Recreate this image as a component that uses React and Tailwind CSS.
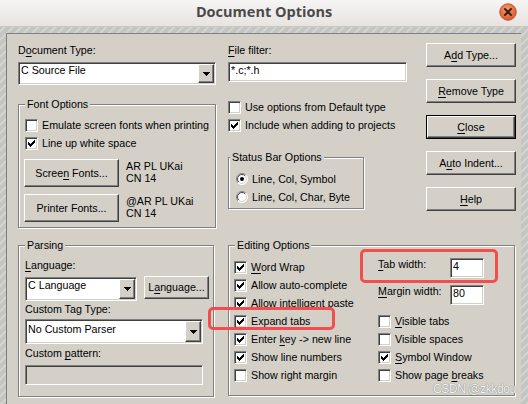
import React from 'react';

const face = "font-['Liberation_Sans',Arial,sans-serif]";
const raised =
  'flex items-center justify-center bg-[#d4d0c8] border border-t-white border-l-white border-b-[#404040] border-r-[#404040] shadow-[inset_-1px_-1px_#808080]';
const sunken =
  'border border-t-[#808080] border-l-[#808080] border-b-white border-r-white shadow-[inset_1px_1px_#404040,inset_-1px_-1px_#d4d0c8]';

const U = ({ children }) => <span className="underline underline-offset-[2px]">{children}</span>;

const Check = ({ on, children }) => (
  <div className="flex items-center h-[18px] whitespace-nowrap">
    <span className={`w-[13px] h-[13px] shrink-0 bg-white flex items-center justify-center ${sunken}`}>
      {on && (
        <svg width="7" height="7" viewBox="0 0 7 7" shapeRendering="crispEdges">
          <path
            d="M6 0h1v1h-1zM5 1h2v1h-2zM0 2h1v1h-1zM4 2h3v1h-3zM0 3h2v1h-2zM3 3h3v1h-3zM0 4h5v1h-5zM1 5h3v1h-3zM2 6h1v1h-1z"
            fill="#000"
          />
        </svg>
      )}
    </span>
    <span className="ml-[4px]">{children}</span>
  </div>
);

const Radio = ({ on, children }) => (
  <div className="flex items-center h-[18px] whitespace-nowrap">
    <svg width="12" height="12" viewBox="0 0 12 12" className="shrink-0">
      <defs>
        <linearGradient id="ro" x1="0" y1="0" x2="1" y2="1">
          <stop offset="0.5" stopColor="#808080" />
          <stop offset="0.5" stopColor="#ffffff" />
        </linearGradient>
        <linearGradient id="ri" x1="0" y1="0" x2="1" y2="1">
          <stop offset="0.5" stopColor="#404040" />
          <stop offset="0.5" stopColor="#d4d0c8" />
        </linearGradient>
      </defs>
      <circle cx="6" cy="6" r="5.5" fill="#fff" stroke="url(#ro)" />
      <circle cx="6" cy="6" r="4.5" fill="none" stroke="url(#ri)" />
      {on && <circle cx="6" cy="6" r="2" fill="#000" />}
    </svg>
    <span className="ml-[4px]">{children}</span>
  </div>
);

const Btn = ({ children, className = '', def }) =>
  def ? (
    <div className={`border border-black ${className}`}>
      <div className={`${raised} w-full h-full`}>
        <span className="whitespace-nowrap">{children}</span>
      </div>
    </div>
  ) : (
    <div className={`${raised} ${className}`}>
      <span className="whitespace-nowrap">{children}</span>
    </div>
  );

const Arrow = () => (
  <div className={`${raised} w-[16px] self-stretch shrink-0`}>
    <svg width="7" height="4" viewBox="0 0 7 4" shapeRendering="crispEdges">
      <path d="M0 0h7v1h-1v1h-1v1h-1v1h-1v-1h-1v-1h-1v-1h-1z" fill="#000" />
    </svg>
  </div>
);

const Select = ({ children, className = '', pt = '' }) => (
  <div className={`flex bg-white p-[1px] ${sunken} ${className}`}>
    <div className={`flex-1 pl-[1px] whitespace-nowrap ${pt}`}>{children}</div>
    <Arrow />
  </div>
);

const Input = ({ children, className = '' }) => (
  <div className={`bg-white pl-[2px] pt-[1px] whitespace-nowrap ${sunken} ${className}`}>{children}</div>
);

const Group = ({ title, legend = 'left-[6px]', className = '', children }) => (
  <div className={`relative border border-[#808080] shadow-[inset_1px_1px_white,1px_1px_white] ${className}`}>
    <span className={`absolute top-[-7px] ${legend} px-[2px] bg-[#d4d0c8] whitespace-nowrap`}>{title}</span>
    {children}
  </div>
);

const TitleBar = () => (
  <div className="relative h-[27px] shrink-0 flex items-center justify-center pb-[3px] bg-linear-to-b from-[#f6f5f4] to-[#e7e4e0] border-b border-[#cdc8c2]">
    <span className="font-['Open_Sans',sans-serif] font-bold text-[14.5px] leading-[18px] text-[#4a4a4a]">
      Document Options
    </span>
    <svg width="18" height="18" viewBox="0 0 18 18" className="absolute right-[11px] top-[3px]">
      <defs>
        <radialGradient id="cb" cx="0.45" cy="0.35" r="0.65">
          <stop offset="0" stopColor="#f79a70" />
          <stop offset="1" stopColor="#dc5526" />
        </radialGradient>
      </defs>
      <circle cx="9" cy="9" r="8.3" fill="url(#cb)" stroke="#b8471f" strokeWidth="0.8" />
      <path d="M6 6l6 6M12 6l-6 6" stroke="#3a2418" strokeWidth="2" strokeLinecap="round" />
    </svg>
  </div>
);

export default function App() {
  return (
    <div
      className={`relative w-[528px] h-[404px] overflow-hidden flex flex-col ${face} text-[10.7px] leading-[13px] text-black bg-[repeating-linear-gradient(135deg,#c4c4c2_0px,#c4c4c2_3px,#d9d9d7_4px,#c4c4c2_6px)]`}
    >
      <TitleBar />
      <div className="flex-1 ml-[6px] mr-[7px] mt-[6px] bg-[#d4d0c8] border-t border-l border-[#808080] flex flex-col">
        <div className="flex items-start pt-[10px] pl-[11px]">
          <div className="w-[198px] shrink-0">
            <div className="h-[13px]">
              D<U>o</U>cument Type:
            </div>
            <Select className="mt-[5px] w-[198px] h-[23px]">C Source File</Select>
            <Group title="Font Options" className="mt-[19px] h-[124px] pt-[11px] pl-[6px]">
              <Check>Emulate screen fonts when printing</Check>
              <Check on>Line up white space</Check>
              <div className="flex items-start mt-[7px] -ml-[1px]">
                <Btn className="w-[95px] h-[28px]">
                  Scree<U>n</U> Fonts...
                </Btn>
                <div className="ml-[7px] mt-[1px] leading-[12px]">
                  AR PL UKai
                  <br />
                  CN 14
                </div>
              </div>
              <div className="flex items-start mt-[7px] -ml-[1px]">
                <Btn className="w-[95px] h-[28px]">Printer Fonts...</Btn>
                <div className="ml-[7px] mt-[1px] leading-[12px]">
                  @AR PL UKai
                  <br />
                  CN 14
                </div>
              </div>
            </Group>
          </div>

          <div className="ml-[12px] w-[179px] shrink-0">
            <div className="h-[13px]">
              <U>F</U>ile filter:
            </div>
            <Input className="mt-[5px] w-[179px] h-[20px]">*.c;*.h</Input>
            <div className="mt-[16px]">
              <Check>Use options from Default type</Check>
              <Check on>Include when adding to projects</Check>
            </div>
            <Group title="Status Bar Options" legend="left-[1px]" className="mt-[23px] w-[136px] h-[52px] pt-[12px] pl-[7px]">
              <Radio on>Line, Col, Symbol</Radio>
              <Radio>Line, Col, Char, Byte</Radio>
            </Group>
          </div>

          <div className="ml-[19px] w-[90px] -mt-[1px] flex flex-col gap-[12px]">
            <Btn className="h-[24px]">
              A<U>d</U>d Type...
            </Btn>
            <Btn className="h-[24px]">
              <U>R</U>emove Type
            </Btn>
            <Btn def className="h-[24px]">
              <U>C</U>lose
            </Btn>
            <Btn className="h-[24px]">
              A<U>u</U>to Indent...
            </Btn>
            <Btn className="h-[24px]">
              <U>H</U>elp
            </Btn>
          </div>
        </div>

        <div className="flex items-start mt-[17px] pl-[11px]">
          <Group title="Parsing" className="w-[196px] h-[152px] shrink-0 pt-[13px] pl-[6px]">
            <div>
              <U>L</U>anguage:
            </div>
            <div className="flex items-start mt-[5px]">
              <Select className="w-[112px] h-[24px]">C Language</Select>
              <Btn className="ml-[7px] -mt-[1px] w-[65px] h-[23px]">
                L<U>a</U>nguage...
              </Btn>
            </div>
            <div className="mt-[2px]">Custom Tag Type:</div>
            <Select className="mt-[3px] w-[178px] h-[25px]" pt="pt-[2px]">
              No Custom Parser
            </Select>
            <div className="mt-[3px]">
              Custom <U>p</U>attern:
            </div>
            <div className={`mt-[5px] w-[178px] h-[20px] bg-[#d4d0c8] ${sunken}`} />
          </Group>

          <Group title="Editing Options" className="ml-[14px] w-[287px] h-[151px] shrink-0 flex">
            <div className="w-[149px] shrink-0 pl-[5px] pt-[12px]">
              <Check on>
                <U>W</U>ord Wrap
              </Check>
              <Check on>Allow auto-complete</Check>
              <Check on>Allow intelligent paste</Check>
              <Check on>
                E<U>x</U>pand tabs
              </Check>
              <Check on>
                Enter <U>k</U>ey -&gt; new line
              </Check>
              <Check on>Show line numbers</Check>
              <Check>Show right margin</Check>
            </div>
            <div className="pt-[12px]">
              <div className="flex items-start">
                <div className="w-[72px]">
                  <U>T</U>ab width:
                </div>
                <Input className="w-[34px] h-[20px]">4</Input>
              </div>
              <div className="flex items-start mt-[7px]">
                <div className="w-[72px]">
                  <U>M</U>argin width:
                </div>
                <Input className="w-[34px] h-[20px]">80</Input>
              </div>
              <div className="mt-[7px]">
                <Check>
                  <U>V</U>isible tabs
                </Check>
                <Check>Visible spaces</Check>
                <Check on>
                  <U>S</U>ymbol Window
                </Check>
                <Check>
                  Show page <U>b</U>reaks
                </Check>
              </div>
            </div>
          </Group>
        </div>
      </div>

      <div className="absolute left-[360px] top-[249px] w-[138px] h-[34px] border-[3px] border-[#f24e4e] rounded-[5px]" />
      <div className="absolute left-[208px] top-[307px] w-[127px] h-[23px] border-[3px] border-[#f24e4e] rounded-[5px]" />
      <div className="absolute left-[433px] top-[382px] text-[12px] leading-[14px] tracking-[-0.4px] text-[#f2f2f2] [text-shadow:0_0_1px_#8a8a8a,0_0_1px_#8a8a8a]">
        CSDN @zkkdou
      </div>
    </div>
  );
}
